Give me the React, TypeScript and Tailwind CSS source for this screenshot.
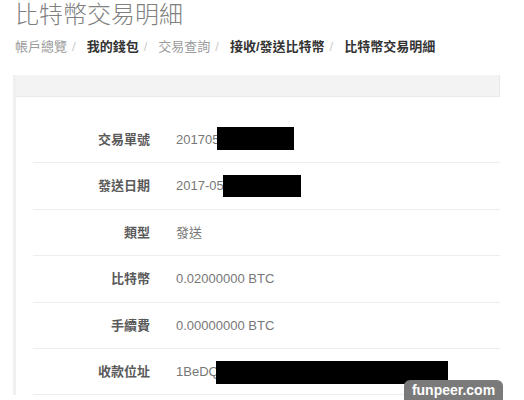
import React from "react";

// 交易明細欄位
const rows = [
  { label: "交易單號", value: "201705", mask: { left: 41, top: 10, w: 77, h: 23 } },
  { label: "發送日期", value: "2017-05", mask: { left: 47, top: 12, w: 78, h: 22 } },
  { label: "類型", value: "發送" },
  { label: "比特幣", value: "0.02000000 BTC" },
  { label: "手續費", value: "0.00000000 BTC" },
  { label: "收款位址", value: "1BeDQ", mask: { left: 40, top: 12, w: 232, h: 23 } },
];

const crumbs = [
  { text: "帳戶總覽", bold: false },
  { text: "我的錢包", bold: true },
  { text: "交易查詢", bold: false },
  { text: "接收/發送比特幣", bold: true },
  { text: "比特幣交易明細", bold: true },
];

export default function App() {
  return (
    <div
      className="relative w-[524px] h-[400px] overflow-hidden bg-white"
      style={{ fontFamily: '"Liberation Sans", "Noto Sans CJK TC", sans-serif' }}
    >
      {/* 標題 */}
      <h1 className="pl-[15px] h-[30px] leading-[30px] text-[24px] font-extralight text-[#808080]">
        比特幣交易明細
      </h1>
      {/* 麵包屑 */}
      <div className="mt-[7px] pl-[15px] flex items-center h-[20px] text-[13px]">
        {crumbs.map((c, i) => (
          <React.Fragment key={i}>
            <span className={c.bold ? "font-bold text-[#333]" : "text-[#9a9a9a]"}>{c.text}</span>
            {i < crumbs.length - 1 && <span className="ml-[5px] mr-[11px] text-[#ccc]">/</span>}
          </React.Fragment>
        ))}
      </div>
      {/* 明細面板 */}
      <div className="mt-[18px] ml-[13px] w-[487px] border-l-[3px] border-[#f0f0f0]">
        <div className="h-[22px] bg-[#f3f3f3] border-b border-[#e9e9e9] border-r" />
        <div className="pt-[20px] pl-[17px]">
          {rows.map((r, i) => (
            <div key={i} className="flex items-center h-[46.4px] border-b border-[#eeeeee]">
              <div className="w-[117px] text-right text-[13px] font-bold text-[#5a5a5a]">{r.label}</div>
              <div className="relative ml-[26px] flex-1 h-full flex items-center text-[13px] text-[#777]">
                {r.value}
                {r.mask && (
                  <div
                    className="absolute bg-black"
                    style={{ left: r.mask.left, top: r.mask.top, width: r.mask.w, height: r.mask.h }}
                  />
                )}
              </div>
            </div>
          ))}
        </div>
      </div>
      {/* 浮水印 */}
      <div className="absolute left-[404px] top-[380px] w-[99px] h-[20px] rounded-t-md bg-[#7a7a7a] flex items-center justify-center text-[14px] font-bold text-white">
        funpeer.com
      </div>
    </div>
  );
}
